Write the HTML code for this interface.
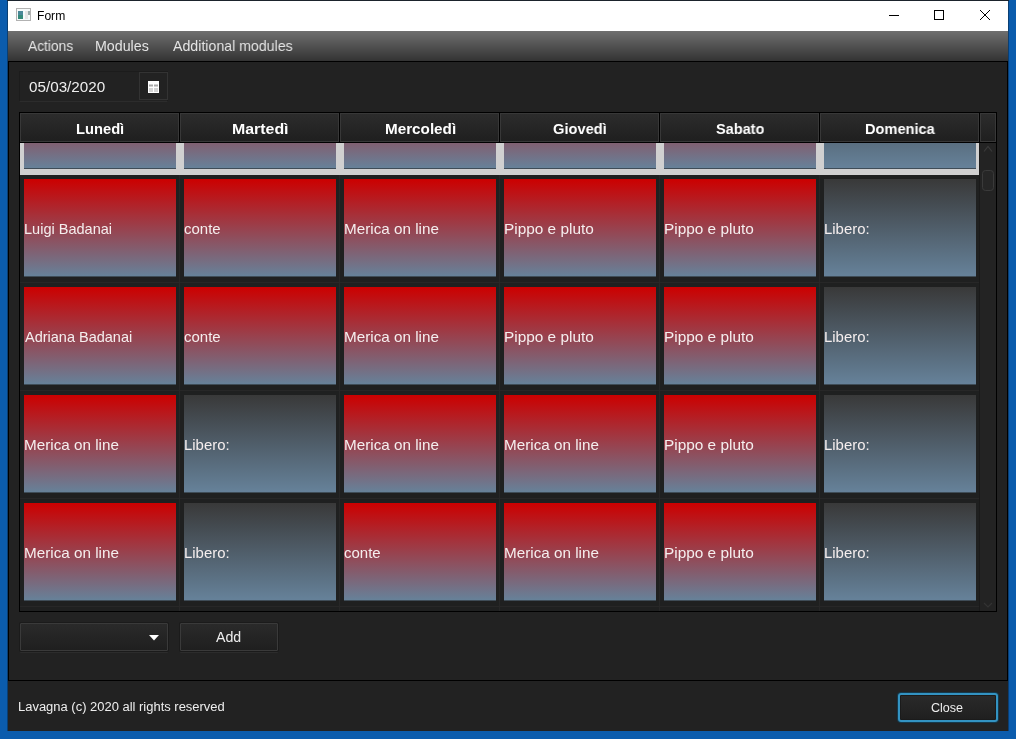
<!DOCTYPE html><html><head><meta charset="utf-8"><style>
*{margin:0;padding:0;box-sizing:border-box}
html,body{width:1016px;height:739px;overflow:hidden;background:#0b5cad;font-family:"Liberation Sans",sans-serif}
.a{position:absolute}
.t{position:absolute;white-space:pre;line-height:20px;transform-origin:0 0;will-change:transform}
#win{left:7px;top:0;width:1002px;height:731px;background:#0a3e72}
#topline{left:7px;top:0;width:1002px;height:1px;background:#1b232c}
#title{left:8px;top:1px;width:1000px;height:30px;background:#fff}
#menu{left:8px;top:31px;width:1000px;height:30px;background:linear-gradient(#6f6f6f,#333)}
#content{left:8px;top:61px;width:1000px;height:620px;background:#222;border:1px solid #000}
#footer{left:8px;top:681px;width:1000px;height:50px;background:#222}
#tbl{left:19px;top:112px;width:978px;height:500px;background:#1f2020;border:1px solid #000;overflow:hidden}
#tb{position:absolute;left:0;top:30px;width:976px;height:468px;overflow:hidden}
.hd{position:absolute;top:0;height:29px;width:159px;background:linear-gradient(#2c2c2c,#1f1f1f);border:1px solid #383838}
.row{position:absolute;left:0;width:959px;height:108px;border-bottom:1px solid #272727}
.cell{position:absolute;top:4px;width:152px;height:98px}
.cr{background:linear-gradient(transparent 97px,rgba(31,32,32,.55) 97px),linear-gradient(#cc0000,#66829a 97.5px)}
.cg{background:linear-gradient(transparent 97px,rgba(31,32,32,.55) 97px),linear-gradient(#393939,#66829a 97.5px)}
.btn{position:absolute;border:1px solid #3a3a3a;border-radius:1px;background:linear-gradient(#2a2a2a,#1f1f1f);box-shadow:0 0 0 1px #1b1b1b,0 2px 0 0 #2c2c2c}
</style></head><body>
<div class="a" id="win"></div><div class="a" id="topline"></div>
<div class="a" id="title"></div>
<svg class="a" style="left:16px;top:8px" width="15" height="13"><rect x="0.5" y="0.5" width="14" height="12" fill="#f6fafa" stroke="#b2b2b2"/><rect x="2" y="3" width="5" height="4" fill="#4a8898"/><rect x="2" y="7" width="5" height="4" fill="#358a7a"/><rect x="9" y="3" width="3" height="8" fill="#e6e6e6"/><rect x="12" y="3" width="2" height="4" fill="#98aaa8"/></svg>
<div class="t" style="left:36.63px;top:5.84px;font-size:12px;color:#000;transform:scaleX(1.0084)">Form</div>
<div class="a" style="left:889px;top:15px;width:10px;height:1px;background:#000"></div>
<div class="a" style="left:934px;top:10px;width:10px;height:10px;border:1px solid #000"></div>
<svg class="a" style="left:979px;top:9px" width="12" height="12"><path d="M1 1L11 11M11 1L1 11" stroke="#000" stroke-width="1"/></svg>
<div class="a" id="menu"></div>
<div class="t" style="left:28.30px;top:36.08px;font-size:14.2px;color:#e4e4e4;transform:scaleX(0.9688)">Actions</div>
<div class="t" style="left:95.36px;top:36.08px;font-size:14.2px;color:#e4e4e4;transform:scaleX(1.0036)">Modules</div>
<div class="t" style="left:172.50px;top:36.08px;font-size:14.2px;color:#e4e4e4;transform:scaleX(0.9978)">Additional modules</div>
<div class="a" id="content"></div>
<div class="a" style="left:19px;top:71px;width:149px;height:31px;border:1px solid #1c1c1c;border-bottom-color:#2c2c2c;background:#222"></div>
<div class="t" style="left:28.94px;top:76.80px;font-size:15px;color:#eee;transform:scaleX(1.0151)">05/03/2020</div>
<div class="a" style="left:139px;top:72px;width:29px;height:28px;border:1px solid #333;background:#222"></div>
<svg class="a" style="left:148px;top:81px" width="11" height="12"><rect width="11" height="12" fill="#fff"/><rect x="1" y="3.5" width="4" height="2" fill="#aaa"/><rect x="6" y="3.5" width="4" height="2" fill="#aaa"/><rect x="1" y="7" width="4" height="4" fill="#d4d4d4"/><rect x="6" y="7" width="4" height="4" fill="#d4d4d4"/></svg>
<div class="a" id="tbl">
<div id="tb">
<div class="a" style="left:159px;top:0;width:1px;height:468px;background:#272727"></div>
<div class="a" style="left:319px;top:0;width:1px;height:468px;background:#272727"></div>
<div class="a" style="left:479px;top:0;width:1px;height:468px;background:#272727"></div>
<div class="a" style="left:639px;top:0;width:1px;height:468px;background:#272727"></div>
<div class="a" style="left:799px;top:0;width:1px;height:468px;background:#272727"></div>
<div class="a" style="left:959px;top:0;width:1px;height:468px;background:#272727"></div>
<div class="row" style="top:-76px;background:#d0d0d0;border-bottom-color:#d0d0d0">
<div class="cell cr" style="left:4px"></div>
<div class="cell cr" style="left:164px"></div>
<div class="cell cr" style="left:324px"></div>
<div class="cell cr" style="left:484px"></div>
<div class="cell cr" style="left:644px"></div>
<div class="cell cg" style="left:804px"></div>
</div>
<div class="row" style="top:32px">
<div class="cell cr" style="left:4px"><div class="t" style="left:0.04px;top:39.98px;font-size:14.5px;color:#f5eeee;transform:scaleX(1.0021)">Luigi Badanai</div></div>
<div class="cell cr" style="left:164px"><div class="t" style="left:0.40px;top:39.98px;font-size:14.5px;color:#f5eeee;transform:scaleX(1.0330)">conte</div></div>
<div class="cell cr" style="left:324px"><div class="t" style="left:-0.32px;top:39.98px;font-size:14.5px;color:#f5eeee;transform:scaleX(1.0510)">Merica on line</div></div>
<div class="cell cr" style="left:484px"><div class="t" style="left:-0.03px;top:39.98px;font-size:14.5px;color:#f5eeee;transform:scaleX(1.0607)">Pippo e pluto</div></div>
<div class="cell cr" style="left:644px"><div class="t" style="left:-0.03px;top:39.98px;font-size:14.5px;color:#f5eeee;transform:scaleX(1.0607)">Pippo e pluto</div></div>
<div class="cell cg" style="left:804px"><div class="t" style="left:0.11px;top:39.98px;font-size:14.5px;color:#f5eeee;transform:scaleX(1.0286)">Libero:</div></div>
</div>
<div class="row" style="top:140px">
<div class="cell cr" style="left:4px"><div class="t" style="left:1.00px;top:39.98px;font-size:14.5px;color:#f5eeee;transform:scaleX(0.9998)">Adriana Badanai</div></div>
<div class="cell cr" style="left:164px"><div class="t" style="left:0.40px;top:39.98px;font-size:14.5px;color:#f5eeee;transform:scaleX(1.0330)">conte</div></div>
<div class="cell cr" style="left:324px"><div class="t" style="left:-0.32px;top:39.98px;font-size:14.5px;color:#f5eeee;transform:scaleX(1.0510)">Merica on line</div></div>
<div class="cell cr" style="left:484px"><div class="t" style="left:-0.03px;top:39.98px;font-size:14.5px;color:#f5eeee;transform:scaleX(1.0607)">Pippo e pluto</div></div>
<div class="cell cr" style="left:644px"><div class="t" style="left:-0.03px;top:39.98px;font-size:14.5px;color:#f5eeee;transform:scaleX(1.0607)">Pippo e pluto</div></div>
<div class="cell cg" style="left:804px"><div class="t" style="left:0.11px;top:39.98px;font-size:14.5px;color:#f5eeee;transform:scaleX(1.0286)">Libero:</div></div>
</div>
<div class="row" style="top:248px">
<div class="cell cr" style="left:4px"><div class="t" style="left:-0.32px;top:39.98px;font-size:14.5px;color:#f5eeee;transform:scaleX(1.0510)">Merica on line</div></div>
<div class="cell cg" style="left:164px"><div class="t" style="left:0.11px;top:39.98px;font-size:14.5px;color:#f5eeee;transform:scaleX(1.0286)">Libero:</div></div>
<div class="cell cr" style="left:324px"><div class="t" style="left:-0.32px;top:39.98px;font-size:14.5px;color:#f5eeee;transform:scaleX(1.0510)">Merica on line</div></div>
<div class="cell cr" style="left:484px"><div class="t" style="left:-0.32px;top:39.98px;font-size:14.5px;color:#f5eeee;transform:scaleX(1.0510)">Merica on line</div></div>
<div class="cell cr" style="left:644px"><div class="t" style="left:-0.03px;top:39.98px;font-size:14.5px;color:#f5eeee;transform:scaleX(1.0607)">Pippo e pluto</div></div>
<div class="cell cg" style="left:804px"><div class="t" style="left:0.11px;top:39.98px;font-size:14.5px;color:#f5eeee;transform:scaleX(1.0286)">Libero:</div></div>
</div>
<div class="row" style="top:356px">
<div class="cell cr" style="left:4px"><div class="t" style="left:-0.32px;top:39.98px;font-size:14.5px;color:#f5eeee;transform:scaleX(1.0510)">Merica on line</div></div>
<div class="cell cg" style="left:164px"><div class="t" style="left:0.11px;top:39.98px;font-size:14.5px;color:#f5eeee;transform:scaleX(1.0286)">Libero:</div></div>
<div class="cell cr" style="left:324px"><div class="t" style="left:0.40px;top:39.98px;font-size:14.5px;color:#f5eeee;transform:scaleX(1.0330)">conte</div></div>
<div class="cell cr" style="left:484px"><div class="t" style="left:-0.32px;top:39.98px;font-size:14.5px;color:#f5eeee;transform:scaleX(1.0510)">Merica on line</div></div>
<div class="cell cr" style="left:644px"><div class="t" style="left:-0.03px;top:39.98px;font-size:14.5px;color:#f5eeee;transform:scaleX(1.0607)">Pippo e pluto</div></div>
<div class="cell cg" style="left:804px"><div class="t" style="left:0.11px;top:39.98px;font-size:14.5px;color:#f5eeee;transform:scaleX(1.0286)">Libero:</div></div>
</div>
<div class="a" style="left:959px;top:0;width:1px;height:468px;background:#1a1a1a"></div>
<div class="a" style="left:960px;top:0;width:16px;height:468px;background:#232323"></div>
<svg class="a" style="left:962px;top:0" width="12" height="468"><path d="M2 8.5L6 3.5L10 8.5" stroke="#3a3a3a" stroke-width="1.2" fill="none"/><rect x="0.5" y="27.5" width="11" height="20" rx="3" fill="#262626" stroke="#3a3a3a"/><path d="M2 460L6 464L10 460" stroke="#333" stroke-width="1.2" fill="none"/></svg>
</div>
<div class="a" style="left:0;top:0;width:976px;height:30px;background:#000"></div>
<div class="hd" style="left:0px"><div class="t" style="left:54.62px;top:4.91px;font-size:14.7px;color:#fff;transform:scaleX(1.0012);font-weight:bold">Lunedì</div></div>
<div class="hd" style="left:160px"><div class="t" style="left:50.65px;top:4.91px;font-size:14.7px;color:#fff;transform:scaleX(1.0822);font-weight:bold">Martedì</div></div>
<div class="hd" style="left:320px"><div class="t" style="left:43.78px;top:4.91px;font-size:14.7px;color:#fff;transform:scaleX(1.0376);font-weight:bold">Mercoledì</div></div>
<div class="hd" style="left:480px"><div class="t" style="left:52.21px;top:4.91px;font-size:14.7px;color:#fff;transform:scaleX(0.9967);font-weight:bold">Giovedì</div></div>
<div class="hd" style="left:640px"><div class="t" style="left:55.21px;top:4.91px;font-size:14.7px;color:#fff;transform:scaleX(0.9884);font-weight:bold">Sabato</div></div>
<div class="hd" style="left:800px"><div class="t" style="left:44.22px;top:4.91px;font-size:14.7px;color:#fff;transform:scaleX(0.9931);font-weight:bold">Domenica</div></div>
<div class="hd" style="left:960px;width:16px"></div>
</div>
<div class="btn" style="left:20px;top:623px;width:148px;height:28px"></div>
<svg class="a" style="left:149px;top:635px" width="10" height="6"><path d="M0 0H10L5 5.5Z" fill="#fff"/></svg>
<div class="btn" style="left:180px;top:623px;width:98px;height:28px"></div>
<div class="t" style="left:216.30px;top:627.08px;font-size:14.2px;color:#eee;transform:scaleX(0.9972)">Add</div>
<div class="a" id="footer"></div>
<div class="t" style="left:18.06px;top:696.84px;font-size:12px;color:#eee;transform:scaleX(1.0801)">Lavagna (c) 2020 all rights reserved</div>
<div class="a" style="left:898px;top:693px;width:100px;height:29px;border:2px solid #3393c2;border-radius:3px;background:linear-gradient(#2a2a2a,#1f1f1f);box-shadow:0 0 0 1px #15394c,inset 0 0 0 1px #1b1b1b"></div>
<div class="t" style="left:931.37px;top:697.84px;font-size:12px;color:#eee;transform:scaleX(1.0457)">Close</div>
</body></html>
